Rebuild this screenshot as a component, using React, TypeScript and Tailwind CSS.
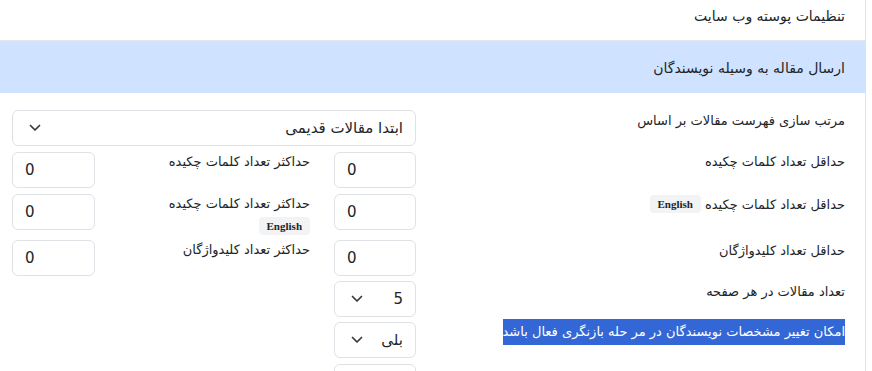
import React from 'react';

const Chevron = () => (
  <svg width="12" height="8" viewBox="0 0 12 8" fill="none" className="shrink-0">
    <path d="M1.5 1.5 6 6l4.5-4.5" stroke="#343a40" strokeWidth="1.7" strokeLinecap="round" strokeLinejoin="round" />
  </svg>
);

const Badge = ({ children }: { children: React.ReactNode }) => (
  <span
    className="inline-flex items-center justify-center h-[18px] px-2 rounded bg-[#f1f3f5] text-[11px] font-bold text-[#212529]"
    style={{ fontFamily: '"Liberation Serif", serif' }}
  >
    {children}
  </span>
);

const NumInput = ({ value, className = '' }: { value: string; className?: string }) => (
  <div
    dir="ltr"
    className={`h-9 border border-[#dee2e6] rounded-md bg-white flex items-center px-3 text-[15px] text-[#212529] ${className}`}
  >
    {value}
  </div>
);

const Select = ({ value, className = '' }: { value: string; className?: string }) => (
  <div
    className={`h-9 border border-[#dee2e6] rounded-md bg-white flex items-center justify-between pr-3 pl-4 text-[15px] text-[#212529] ${className}`}
  >
    <span>{value}</span>
    <Chevron />
  </div>
);

export default function App() {
  return (
    <div
      className="w-full h-[371px] overflow-hidden bg-white text-[#212529]"
      style={{ fontFamily: '"DejaVu Sans", "Noto Sans", sans-serif' }}
    >
      <div className="w-[866px] h-full border-r border-[#dee2e6]" dir="rtl">
        {/* header */}
        <div className="h-10 pr-5 pt-[5px] text-[14px] leading-[22px]">تنظیمات پوسته وب سایت</div>
        <div className="h-[53px] border-t border-[#e3e6ea] bg-[#cfe2ff] flex items-center pr-5 pt-[2px] text-[14px]">
          ارسال مقاله به وسیله نویسندگان
        </div>

        {/* form */}
        <div className="pt-[17px] pr-5 pl-3 text-[13px]">
          <div className="flex mb-1.5">
            <div className="flex-1 leading-5 pt-[1px]">مرتب سازی فهرست مقالات بر اساس</div>
            <Select value="ابتدا مقالات قدیمی" className="w-[404px]" />
          </div>

          <div className="flex mb-1.5">
            <div className="flex-1 leading-5">حداقل تعداد کلمات چکیده</div>
            <div className="w-[404px] flex">
              <NumInput value="0" className="w-[82px]" />
              <div className="flex-1 pr-6 leading-5">حداکثر تعداد کلمات چکیده</div>
              <NumInput value="0" className="w-[83px]" />
            </div>
          </div>

          <div className="flex mb-1">
            <div className="flex-1 leading-5 pt-[1px] flex items-start gap-1">
              <span>حداقل تعداد کلمات چکیده</span>
              <Badge>English</Badge>
            </div>
            <div className="w-[404px] flex">
              <NumInput value="0" className="w-[82px]" />
              <div className="flex-1 pr-6 leading-5">
                <div>حداکثر تعداد کلمات چکیده</div>
                <div className="mt-[2px]">
                  <Badge>English</Badge>
                </div>
              </div>
              <NumInput value="0" className="w-[83px]" />
            </div>
          </div>

          <div className="flex mb-[5px]">
            <div className="flex-1 leading-5 pt-[1px]">حداقل تعداد کلیدواژگان</div>
            <div className="w-[404px] flex">
              <NumInput value="0" className="w-[82px]" />
              <div className="flex-1 pr-6 leading-5">حداکثر تعداد کلیدواژگان</div>
              <NumInput value="0" className="w-[83px]" />
            </div>
          </div>

          <div className="flex mb-[5px]">
            <div className="flex-1 leading-5 pt-[1px]">تعداد مقالات در هر صفحه</div>
            <div className="w-[404px] flex">
              <Select value="5" className="w-[82px]" />
            </div>
          </div>

          <div className="flex mb-1.5">
            <div className="flex-1 -mt-[3px]">
              <span className="inline-block bg-[#3367d6] text-white leading-[26px]">
                امکان تغییر مشخصات نویسندگان در مر حله بازنگری فعال باشد
              </span>
            </div>
            <div className="w-[404px] flex">
              <Select value="بلی" className="w-[82px]" />
            </div>
          </div>

          <div className="flex">
            <div className="flex-1" />
            <div className="w-[404px] flex">
              <NumInput value="" className="w-[82px]" />
            </div>
          </div>
        </div>
      </div>
    </div>
  );
}
